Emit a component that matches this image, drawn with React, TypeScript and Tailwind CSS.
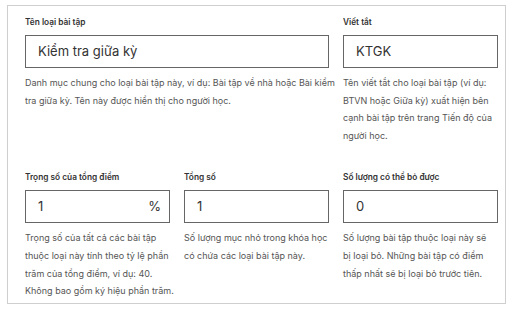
import React from "react";

const font = { fontFamily: "Inter, 'Noto Sans', sans-serif" };

function Label({ children }: { children: React.ReactNode }) {
  return (
    <div className="text-[8.3px] leading-[15px] font-semibold text-[#333333] mb-[5px] whitespace-nowrap">
      {children}
    </div>
  );
}

function Desc({ children, className = "" }: { children: React.ReactNode; className?: string }) {
  return (
    <div className={`mt-[6px] text-[9px] leading-[17.6px] text-[#555555] ${className}`}>
      {children}
    </div>
  );
}

function Field({ value, suffix }: { value: string; suffix?: string }) {
  return (
    <div className="h-[33px] border border-[#666666] flex items-center justify-between pl-[12px] pr-[8px] text-[13px] text-[#333333] bg-white">
      <span>{value}</span>
      {suffix && <span>{suffix}</span>}
    </div>
  );
}

export default function App() {
  return (
    <div className="w-[510px] h-[309px] bg-white pt-[5px] pl-[7px]" style={font}>
      <div className="w-[499px] h-[299px] border border-[#cfcfcf] pl-[17px] pt-[9px] overflow-hidden">
        <div className="w-[473px] overflow-hidden">
          <div className="grid grid-cols-[304px_155px] gap-x-[14px]">
            <div>
              <Label>Tên loại bài tập</Label>
              <Field value="Kiểm tra giữa kỳ" />
              <Desc className="w-[314px]">
                Danh mục chung cho loại bài tập này, ví dụ: Bài tập về nhà hoặc Bài kiểm tra giữa kỳ. Tên này được hiển thị cho người học.
              </Desc>
            </div>
            <div className="overflow-hidden">
              <Label>Viết tắt</Label>
              <Field value="KTGK" />
              <Desc className="w-[163px]">
                Tên viết tắt cho loại bài tập (ví dụ: BTVN hoặc Giữa kỳ) xuất hiện bên cạnh bài tập trên trang Tiến độ của người học.
              </Desc>
            </div>
          </div>
          <div className="grid grid-cols-[145px_145px_155px] gap-x-[14px] mt-[26px]">
            <div>
              <Label>Trọng số của tổng điểm</Label>
              <Field value="1" suffix="%" />
              <Desc className="w-[149px]">
                Trọng số của tất cả các bài tập thuộc loại này tính theo tỷ lệ phần trăm của tổng điểm, ví dụ: 40. Không bao gồm ký hiệu phần trăm.
              </Desc>
            </div>
            <div>
              <Label>Tổng số</Label>
              <Field value="1" />
              <Desc className="w-[149px]">
                Số lượng mục nhỏ trong khóa học có chứa các loại bài tập này.
              </Desc>
            </div>
            <div>
              <Label>Số lượng có thể bỏ được</Label>
              <Field value="0" />
              <Desc className="w-[149px]">
                Số lượng bài tập thuộc loại này sẽ bị loại bỏ. Những bài tập có điểm thấp nhất sẽ bị loại bỏ trước tiên.
              </Desc>
            </div>
          </div>
        </div>
      </div>
    </div>
  );
}
